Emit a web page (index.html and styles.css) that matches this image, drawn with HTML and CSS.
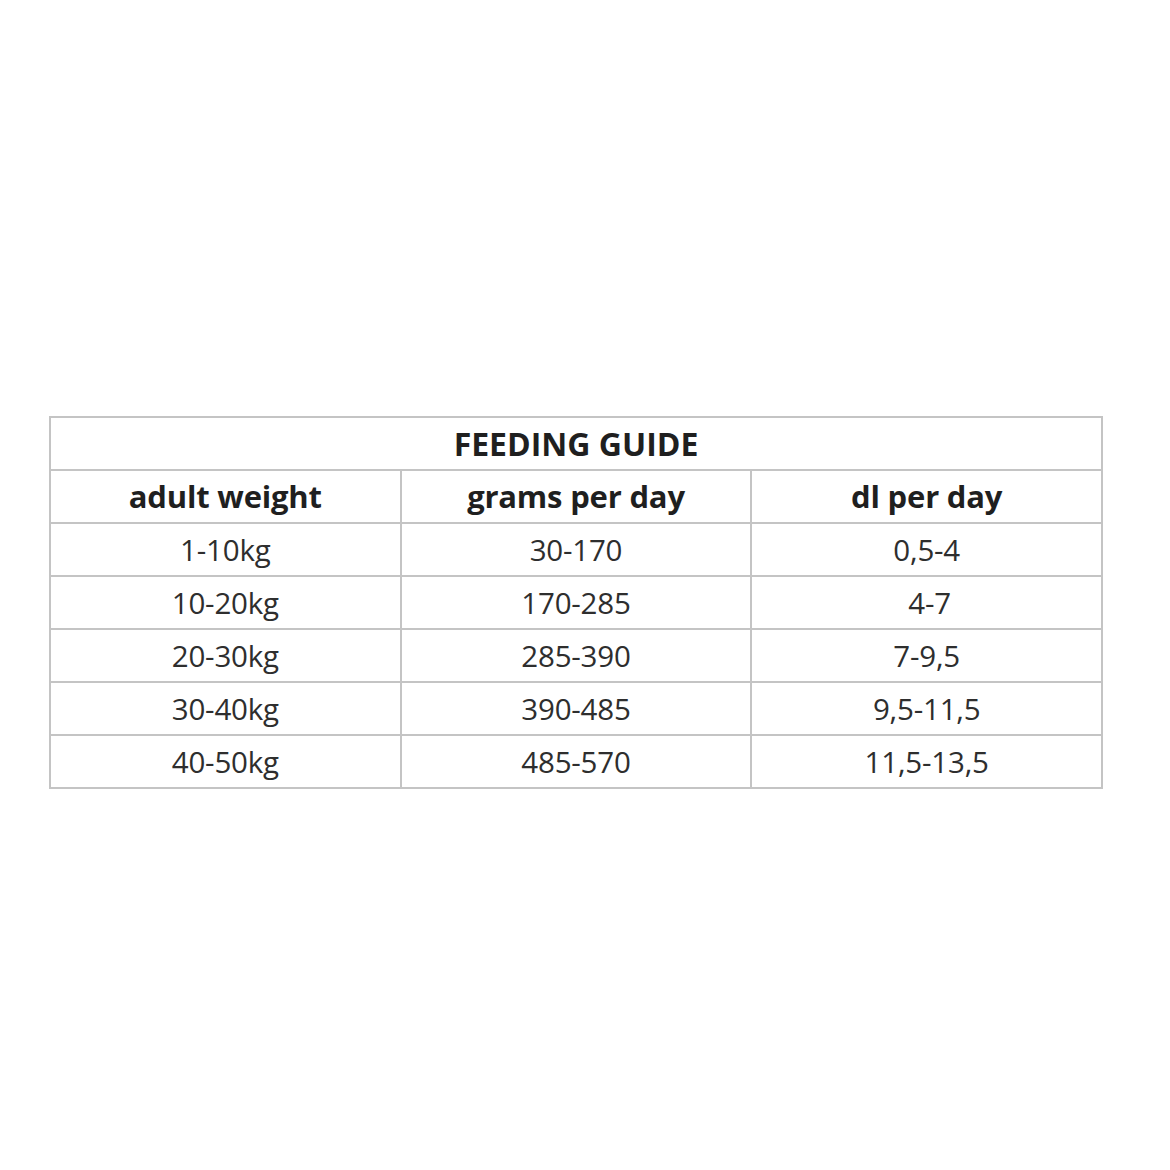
FILE: index.html
```html
<!DOCTYPE html>
<html>
<head>
<meta charset="utf-8">
<link rel="stylesheet" href="styles.css">
</head>
<body>
<div class="page">
  <table class="guide">
    <colgroup><col class="c"><col class="c"><col class="c"></colgroup>
    <tr class="title-row"><th colspan="3" class="title">FEEDING GUIDE</th></tr>
    <tr class="head-row"><th>adult weight</th><th>grams per day</th><th>dl per day</th></tr>
    <tr><td>1-10kg</td><td>30-170</td><td>0,5-4</td></tr>
    <tr><td>10-20kg</td><td>170-285</td><td class="nudge">4-7</td></tr>
    <tr><td>20-30kg</td><td>285-390</td><td>7-9,5</td></tr>
    <tr><td>30-40kg</td><td>390-485</td><td>9,5-11,5</td></tr>
    <tr><td>40-50kg</td><td>485-570</td><td>11,5-13,5</td></tr>
  </table>
</div>
</body>
</html>
```
FILE: styles.css
```css
html, body {
  margin: 0;
  padding: 0;
  background: #ffffff;
}
.page {
  width: 1170px;
  height: 1170px;
  padding: 416px 0 0 49px;
  box-sizing: border-box;
}
.guide {
  border-collapse: collapse;
  table-layout: fixed;
  width: 1054px;
  font-family: "Open Sans", "Liberation Sans", sans-serif;
}
.guide th, .guide td {
  border: 2px solid #c4c4c4;
  text-align: center;
  vertical-align: middle;
  padding: 0;
  height: 51px;
  line-height: 1;
}
.guide th {
  font-weight: 700;
  font-size: 31px;
  color: #1f1f1f;
  letter-spacing: -0.2px;
}
.guide th.title {
  font-size: 32px;
  letter-spacing: 0;
}
.guide td {
  font-weight: 400;
  font-size: 29.5px;
  color: #2e2e2e;
  letter-spacing: -0.2px;
}
.guide td.nudge {
  padding-left: 6px;
}
```
